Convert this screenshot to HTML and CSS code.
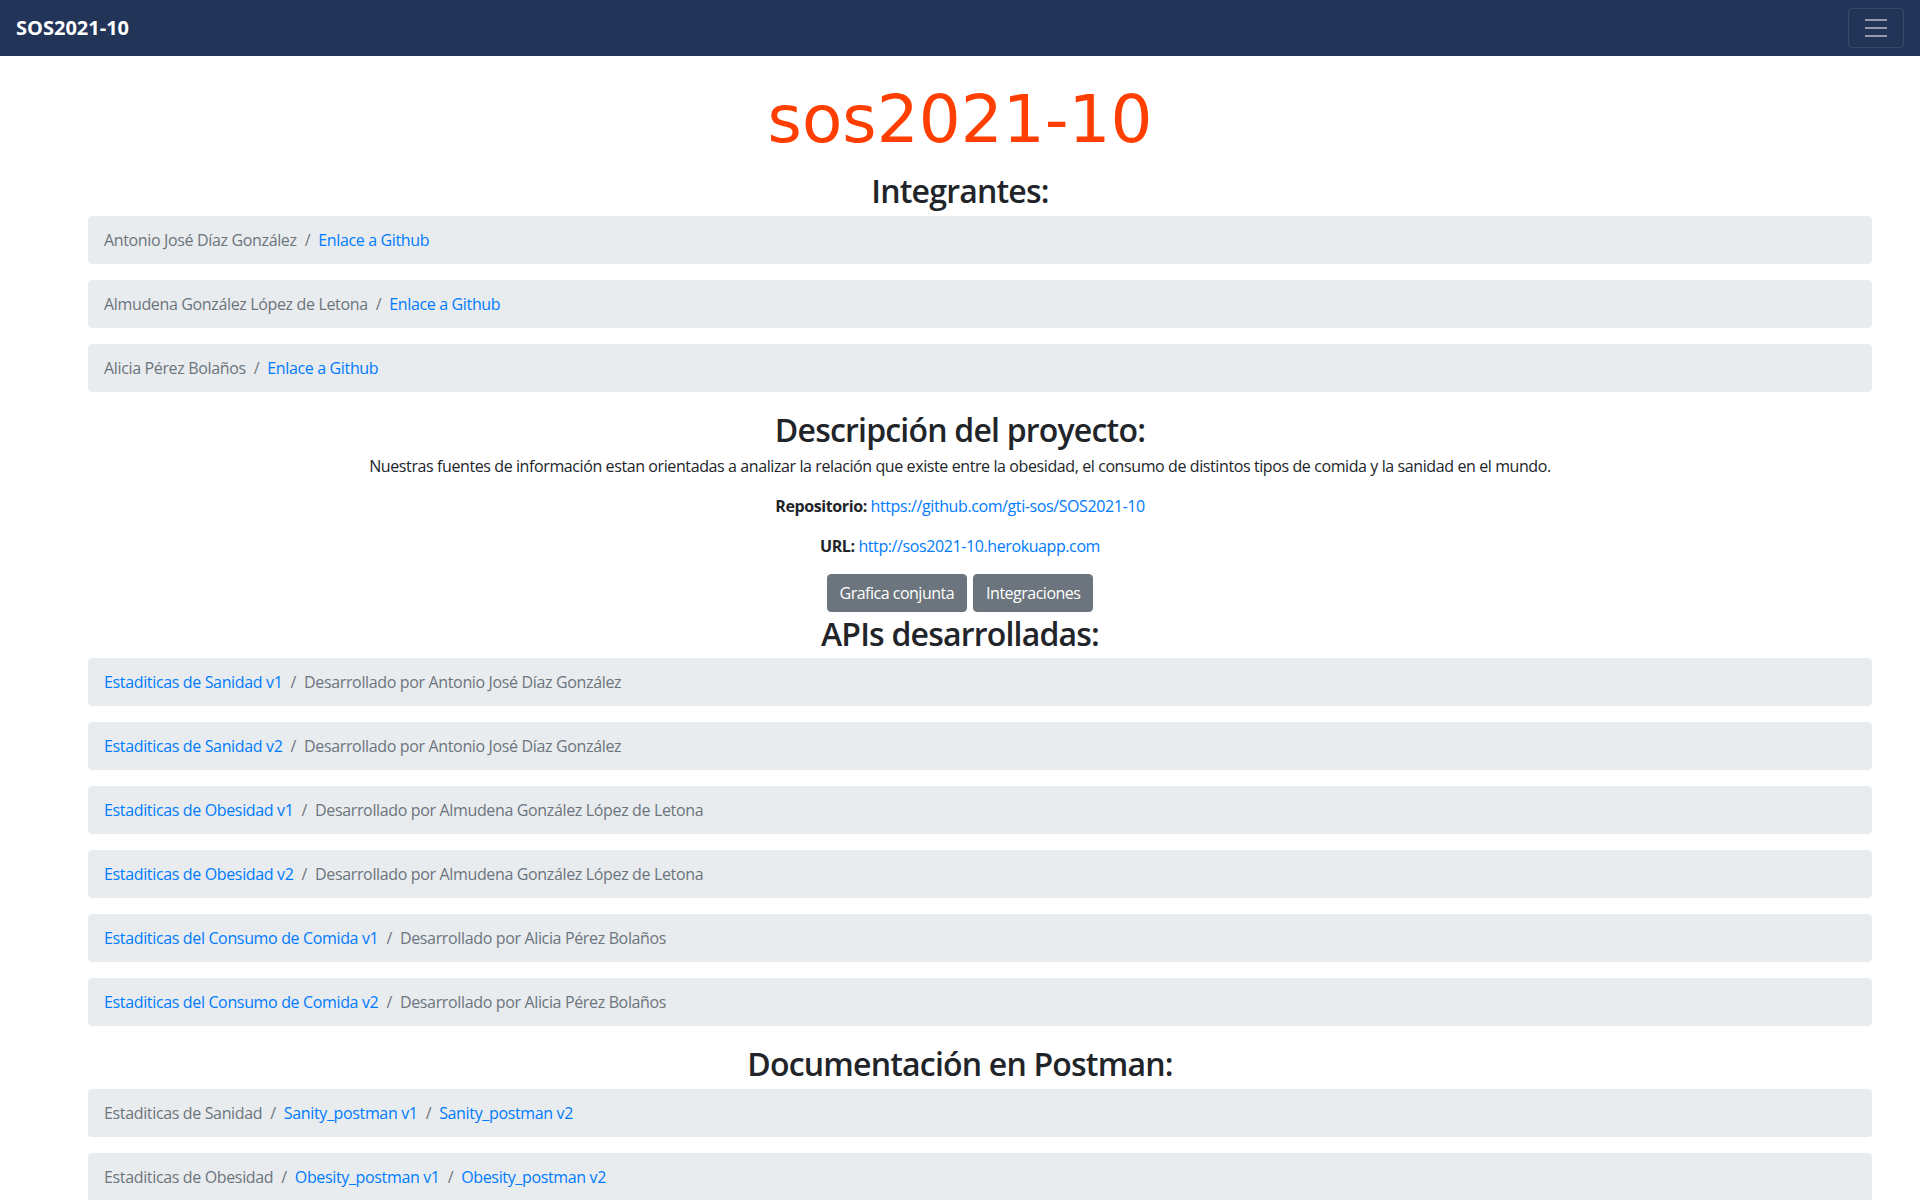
FILE: index.html
```html
<!DOCTYPE html>
<html lang="es">
<head>
<meta charset="utf-8">
<title>SOS2021-10</title>
<link rel="stylesheet" href="styles.css">
</head>
<body>
<nav class="navbar">
  <a class="brand" href="#">SOS2021-10</a>
  <button class="toggler" type="button" aria-label="Toggle navigation">
    <svg class="toggler-icon" width="30" height="30" viewBox="0 0 30 30"><path d="M4 7h22M4 15h22M4 23h22" stroke="rgba(255,255,255,0.5)" stroke-width="2" stroke-linecap="butt" stroke-miterlimit="10"/></svg>
  </button>
</nav>
<main class="main">
  <h1 class="title">sos2021-10</h1>

  <h2 class="section-title">Integrantes:</h2>
  <div class="crumb-list">
    <ol class="breadcrumb"><li class="crumb">Antonio José Díaz González</li><li class="crumb"><a href="#">Enlace a Github</a></li></ol>
    <ol class="breadcrumb"><li class="crumb">Almudena González López de Letona</li><li class="crumb"><a href="#">Enlace a Github</a></li></ol>
    <ol class="breadcrumb"><li class="crumb">Alicia Pérez Bolaños</li><li class="crumb"><a href="#">Enlace a Github</a></li></ol>
  </div>

  <h2 class="section-title">Descripción del proyecto:</h2>
  <p class="text">Nuestras fuentes de información estan orientadas a analizar la relación que existe entre la obesidad, el consumo de distintos tipos de comida y la sanidad en el mundo.</p>
  <p class="text"><strong>Repositorio:</strong> <a href="#">https://github.com/gti-sos/SOS2021-10</a></p>
  <p class="text"><strong>URL:</strong> <a href="#">http://sos2021-10.herokuapp.com</a></p>
  <div class="buttons">
    <button class="btn" type="button">Grafica conjunta</button>
    <button class="btn" type="button">Integraciones</button>
  </div>

  <h2 class="section-title">APIs desarrolladas:</h2>
  <div class="crumb-list">
    <ol class="breadcrumb"><li class="crumb"><a href="#">Estaditicas de Sanidad v1</a></li><li class="crumb">Desarrollado por Antonio José Díaz González</li></ol>
    <ol class="breadcrumb"><li class="crumb"><a href="#">Estaditicas de Sanidad v2</a></li><li class="crumb">Desarrollado por Antonio José Díaz González</li></ol>
    <ol class="breadcrumb"><li class="crumb"><a href="#">Estaditicas de Obesidad v1</a></li><li class="crumb">Desarrollado por Almudena González López de Letona</li></ol>
    <ol class="breadcrumb"><li class="crumb"><a href="#">Estaditicas de Obesidad v2</a></li><li class="crumb">Desarrollado por Almudena González López de Letona</li></ol>
    <ol class="breadcrumb"><li class="crumb"><a href="#">Estaditicas del Consumo de Comida v1</a></li><li class="crumb">Desarrollado por Alicia Pérez Bolaños</li></ol>
    <ol class="breadcrumb"><li class="crumb"><a href="#">Estaditicas del Consumo de Comida v2</a></li><li class="crumb">Desarrollado por Alicia Pérez Bolaños</li></ol>
  </div>

  <h2 class="section-title">Documentación en Postman:</h2>
  <div class="crumb-list">
    <ol class="breadcrumb"><li class="crumb">Estaditicas de Sanidad</li><li class="crumb"><a href="#">Sanity_postman v1</a></li><li class="crumb"><a href="#">Sanity_postman v2</a></li></ol>
    <ol class="breadcrumb"><li class="crumb">Estaditicas de Obesidad</li><li class="crumb"><a href="#">Obesity_postman v1</a></li><li class="crumb"><a href="#">Obesity_postman v2</a></li></ol>
  </div>
</main>
</body>
</html>
```
FILE: styles.css
```css
* { box-sizing: border-box; }

body {
  margin: 0;
  font-family: "Open Sans", "Noto Sans", "Liberation Sans", sans-serif;
  font-size: 16px;
  line-height: 1.5;
  color: #212529;
  background: #fff;
}

a { color: #007bff; text-decoration: none; }

.navbar {
  display: flex;
  align-items: center;
  justify-content: space-between;
  padding: 8px 16px;
  background: #233459;
}

.brand {
  color: #fff;
  font-size: 20px;
  font-weight: 700;
  line-height: 30px;
  padding: 5px 0;
}

.toggler {
  display: flex;
  align-items: center;
  justify-content: center;
  width: 56px;
  height: 40px;
  padding: 4px 12px;
  background: transparent;
  border: 1px solid rgba(255, 255, 255, 0.1);
  border-radius: 4px;
}

.main {
  padding: 0 48px;
  text-align: center;
}

.title {
  margin: 24px 0 10px;
  font-family: "DejaVu Sans", sans-serif;
  font-size: 66px;
  font-weight: 400;
  line-height: 1.2;
  color: #ff3e00;
}

.section-title {
  margin: 0 0 5px;
  padding-top: 3px;
  font-size: 32px;
  font-weight: 600;
  letter-spacing: -0.8px;
  line-height: 1.2;
}

.crumb-list {
  padding-left: 40px;
  margin-bottom: 16px;
  text-align: left;
}

.breadcrumb {
  display: flex;
  flex-wrap: wrap;
  list-style: none;
  margin: 0 0 16px;
  padding: 12px 16px;
  background: #e9ecef;
  border-radius: 4px;
  letter-spacing: -0.35px;
}

.crumb-list .breadcrumb:last-child { margin-bottom: 0; }

.crumb { color: #6c757d; }

.crumb + .crumb { padding-left: 8px; }

.crumb + .crumb::before {
  content: "/";
  display: inline-block;
  padding-right: 8px;
  color: #6c757d;
}

.text {
  margin: 0 0 16px;
  letter-spacing: -0.4px;
}

.text strong { font-weight: 700; }

.buttons {
  display: flex;
  justify-content: center;
  gap: 6px;
}

.btn {
  font-family: inherit;
  font-size: 16px;
  letter-spacing: -0.5px;
  line-height: 24px;
  padding: 6px 12px;
  color: #fff;
  background: #6c757d;
  border: 1px solid #6c757d;
  border-radius: 4px;
}
```
